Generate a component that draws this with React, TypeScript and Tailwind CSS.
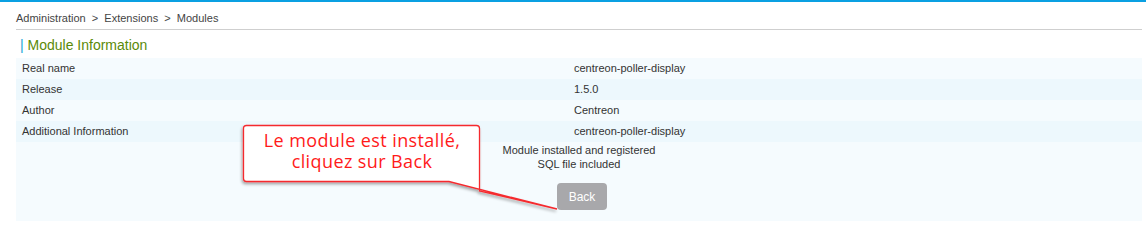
const rows = [
  { label: "Real name", value: "centreon-poller-display" },
  { label: "Release", value: "1.5.0" },
  { label: "Author", value: "Centreon" },
  { label: "Additional Information", value: "centreon-poller-display" },
];

const Callout = () => (
  <div className="absolute left-[236px] top-[118px] w-[330px] h-[100px] pointer-events-none">
    <svg width="330" height="100" className="absolute left-0 top-0">
      <defs>
        <filter id="sh" x="-10%" y="-10%" width="120%" height="130%">
          <feDropShadow dx="-1" dy="2" stdDeviation="1.5" floodColor="#000" floodOpacity="0.35" />
        </filter>
      </defs>
      <path
        d="M10.5 5.5 H240.5 Q243.5 5.5 243.5 8.5 V61.5 L243.5 71 L321 89 L213 61.5 H10.5 Q7.5 61.5 7.5 58.5 V8.5 Q7.5 5.5 10.5 5.5 Z"
        fill="#fff"
        stroke="#f52a2e"
        strokeWidth="1.3"
        filter="url(#sh)"
      />
    </svg>
    <div className="absolute left-[8px] top-[10px] w-[236px] text-center text-[18px] leading-[21px] text-[#ff1a1a] font-['Open_Sans',sans-serif] tracking-[0.4px]">
      Le module est installé,
      <br />
      cliquez sur Back
    </div>
  </div>
);

export default function App() {
  return (
    <div className="relative w-[1146px] h-[242px] bg-white border-t-2 border-[#0aa0e2] font-['Liberation_Sans',Arial,sans-serif] text-[11px] text-[#333]">
      <div className="ml-4 mr-1">
        <div className="pt-[10px] pb-[4px] leading-[13px] text-[#444]">
          Administration &nbsp;&gt;&nbsp; Extensions &nbsp;&gt;&nbsp; Modules
        </div>
        <div className="border-t border-[#cfcfcf]" />
        <div className="pt-[6px] pb-[4px] pl-1 text-[14px] leading-[18px] text-[#5a8a08]">
          <span className="text-[#19a3d8]">|</span> Module Information
        </div>
        <div className="bg-[#f5fbfe]">
          {rows.map((r, i) => (
            <div
              key={r.label}
              className={`flex h-[21px] items-center ${i % 2 === 1 ? "bg-[#edf8fd]" : "bg-[#f5fbfe]"}`}
            >
              <div className="w-[558px] pl-[6px]">{r.label}</div>
              <div>{r.value}</div>
            </div>
          ))}
          <div className="flex flex-col items-center pt-[1px] h-[79px]">
            <div className="leading-[14px]">Module installed and registered</div>
            <div className="leading-[14px]">SQL file included</div>
            <button className="mt-[12px] ml-[6px] w-[50px] h-[27px] rounded-[4px] bg-[#a8a8ab] text-white text-[12px]">
              Back
            </button>
          </div>
        </div>
      </div>
      <Callout />
    </div>
  );
}
